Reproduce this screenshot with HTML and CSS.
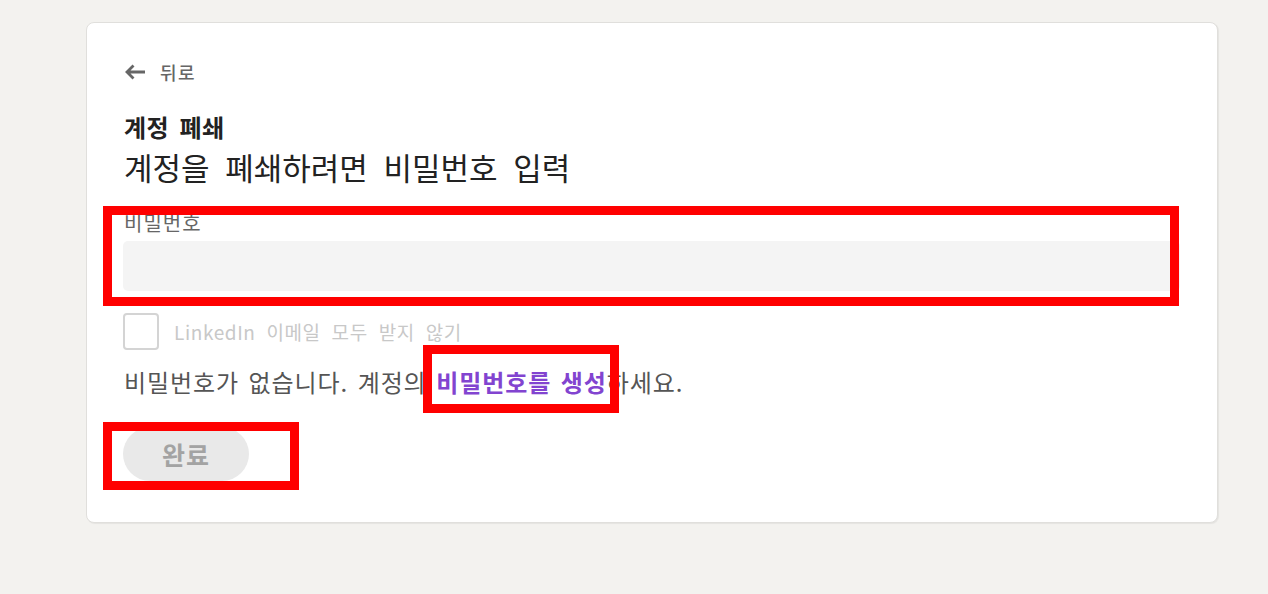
FILE: index.html
```html
<!DOCTYPE html>
<html lang="ko">
<head>
<meta charset="utf-8">
<title>계정 폐쇄</title>
<link rel="stylesheet" href="styles.css">
</head>
<body>
<main class="card">
  <a class="back" href="#">
    <svg class="back-icon" width="22" height="16" viewBox="0 0 22 16" aria-hidden="true">
      <path d="M21 8H3M9.5 1.5L3 8l6.5 6.5" fill="none" stroke="#666" stroke-width="2.8" stroke-linecap="butt" stroke-linejoin="miter"/>
    </svg>
    <span>뒤로</span>
  </a>
  <h1 class="title">계정 폐쇄</h1>
  <p class="subtitle">계정을 폐쇄하려면 비밀번호 입력</p>
  <label class="field-label" for="pw">비밀번호</label>
  <input class="field" id="pw" type="password">
  <div class="check-row">
    <span class="checkbox"></span>
    <span class="check-label">LinkedIn 이메일 모두 받지 않기</span>
  </div>
  <p class="note">비밀번호가 없습니다. 계정의 <a class="link" href="#">비밀번호를 생성</a>하세요.</p>
  <button class="done" type="button">완료</button>
</main>
<div class="mark mark-field"></div>
<div class="mark mark-link"></div>
<div class="mark mark-button"></div>
</body>
</html>
```
FILE: styles.css
```css
* { box-sizing: border-box; }
html, body { margin: 0; }
body {
  background: #f3f2ef;
  font-family: "Noto Sans CJK KR", "Noto Sans", sans-serif;
  padding: 22px 0 0 86px;
  position: relative;
  min-height: 594px;
}
.card {
  width: 1132px;
  background: #fff;
  border: 1px solid #e0dfdc;
  border-radius: 8px;
  box-shadow: 1px 1px 1px rgba(0,0,0,0.06);
  padding: 37px 37px 41px 36px;
  display: flex;
  flex-direction: column;
  align-items: flex-start;
}
.back {
  display: flex;
  align-items: center;
  gap: 14px;
  height: 24px;
  text-decoration: none;
  color: #666;
  font-size: 18px;
  letter-spacing: 1.5px;
  font-weight: 500;
  margin-left: 1px;
}
.back-icon { display: block; }
.title {
  margin: 28px 0 0 1px;
  font-size: 24px;
  line-height: 30px;
  font-weight: 700;
  color: #222;
  letter-spacing: 0.5px;
  word-spacing: 3px;
}
.subtitle {
  margin: 6px 0 0 1px;
  font-size: 31px;
  line-height: 38px;
  color: #222;
  word-spacing: 7px;
}
.field-label {
  margin-top: 25px;
  font-size: 20px;
  line-height: 24px;
  color: #666;
  letter-spacing: 1px;
  margin-left: 1px;
}
.field {
  margin-top: 6px;
  width: 100%;
  height: 50px;
  border: none;
  border-radius: 5px;
  background: #f4f4f4;
  outline: none;
}
.check-row {
  margin-top: 22px;
  display: flex;
  align-items: center;
  gap: 15px;
  height: 36px;
}
.checkbox {
  width: 36px;
  height: 37px;
  border: 2px solid #d4d4d4;
  border-radius: 4px;
  background: #fff;
}
.check-label {
  font-size: 19px;
  color: #c8c8c8;
  letter-spacing: 0.6px;
  word-spacing: 5px;
}
.note {
  margin: 19px 0 0 1px;
  font-size: 24px;
  line-height: 28px;
  color: #555;
  letter-spacing: 0.9px;
  word-spacing: 2px;
}
.link {
  color: #8244d0;
  font-weight: 700;
  text-decoration: none;
}
.done {
  margin-top: 31px;
  width: 126px;
  height: 54px;
  border: none;
  border-radius: 27px;
  background: #e9e9e9;
  color: #a3a3a3;
  font-family: inherit;
  font-size: 25px;
  letter-spacing: 1px;
  font-weight: 700;
  padding: 0;
}
.mark {
  position: absolute;
  border: 9px solid #ff0000;
  pointer-events: none;
}
.mark-field { left: 103px; top: 206px; width: 1076px; height: 100px; }
.mark-link { left: 423px; top: 345px; width: 196px; height: 68px; }
.mark-button { left: 103px; top: 422px; width: 196px; height: 68px; }
```
